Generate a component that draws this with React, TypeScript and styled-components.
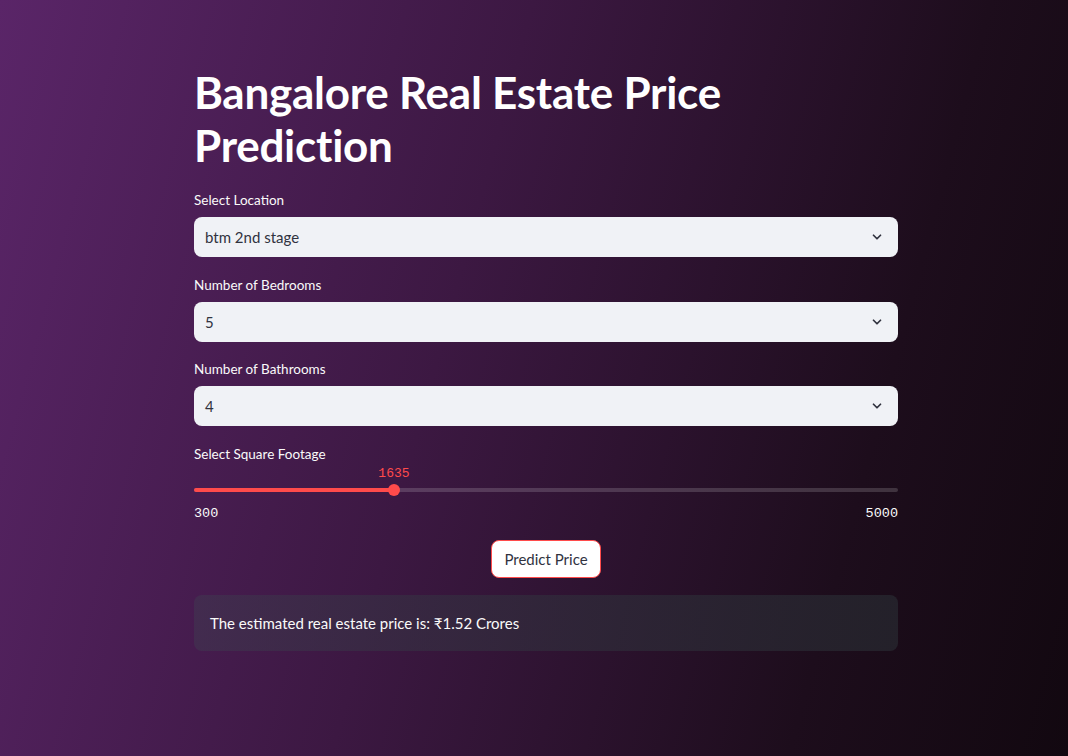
import styled, { createGlobalStyle } from "styled-components";
import { useState } from "react";

const GlobalStyle = createGlobalStyle`
  html, body {
    margin: 0;
    padding: 0;
  }
  body {
    font-family: "Lato", "Noto Sans", sans-serif;
    background: linear-gradient(105deg, #5a2568 0%, #3c1842 42%, #1d0d1c 78%, #120810 100%);
    min-height: 756px;
    color: #fafafa;
  }
`;

const Page = styled.div`
  width: 100%;
  min-height: 756px;
  box-sizing: border-box;
  padding-left: 24px;
  display: flex;
  justify-content: center;
`;

const Main = styled.main`
  width: 704px;
  padding-top: 66px;
  display: flex;
  flex-direction: column;
`;

const Title = styled.h1`
  margin: 0 0 19px;
  font-size: 44px;
  font-weight: 700;
  line-height: 53px;
  color: #ffffff;
  letter-spacing: -0.25px;
`;

const Field = styled.div<{ $last?: boolean }>`
  display: flex;
  flex-direction: column;
  margin-bottom: ${(p) => (p.$last ? 0 : 18.5)}px;
`;

const Label = styled.label`
  font-size: 13.5px;
  color: #fafafa;
  line-height: 18px;
  margin-bottom: 8px;
`;

const SelectBox = styled.div`
  height: 40px;
  border-radius: 8px;
  background: #f0f2f6;
  display: flex;
  align-items: center;
  justify-content: space-between;
  padding: 0 14px 0 11px;
  color: #31333f;
  font-size: 15px;
`;

const SliderWrap = styled.div`
  position: relative;
  height: 27px;
  display: flex;
  align-items: flex-end;
`;

const Track = styled.div`
  position: relative;
  width: 100%;
  height: 4px;
  border-radius: 2px;
  background: rgba(255, 255, 255, 0.16);
  margin-bottom: 6px;
`;

const Fill = styled.div`
  position: absolute;
  left: 0;
  top: 0;
  bottom: 0;
  border-radius: 2px;
  background: #ff4b4b;
`;

const Thumb = styled.div`
  position: absolute;
  top: 50%;
  width: 12px;
  height: 12px;
  margin: -6px 0 0 -6px;
  border-radius: 50%;
  background: #ff4b4b;
`;

const ThumbValue = styled.span`
  position: absolute;
  bottom: 11px;
  transform: translateX(-50%);
  font-family: "Liberation Mono", monospace;
  font-size: 13px;
  color: #ff4b4b;
`;

const Range = styled.div`
  display: flex;
  justify-content: space-between;
  font-family: "Liberation Mono", monospace;
  font-size: 13.5px;
  color: #fafafa;
  margin-top: 8px;
`;

const ButtonRow = styled.div`
  display: flex;
  justify-content: center;
  margin-top: 19px;
`;

const PredictButton = styled.button`
  height: 38px;
  padding: 0 12px;
  border-radius: 8px;
  border: 1px solid #ff4b4b;
  background: #ffffff;
  color: #31333f;
  font-family: inherit;
  font-size: 15px;
  cursor: pointer;
`;

const Result = styled.div`
  margin-top: 17px;
  height: 56px;
  border-radius: 8px;
  background: linear-gradient(90deg, rgba(64, 56, 80, 0.55), rgba(38, 38, 46, 0.8));
  display: flex;
  align-items: center;
  padding: 0 16px;
  font-size: 15px;
  color: #fafafa;
`;

const Chevron = () => (
  <svg width="14" height="14" viewBox="0 0 24 24" fill="none" stroke="#31333f" strokeWidth="3" strokeLinecap="round" strokeLinejoin="round">
    <path d="M6 9l6 6 6-6" />
  </svg>
);

function Select({ label, value }: { label: string; value: string }) {
  return (
    <Field>
      <Label>{label}</Label>
      <SelectBox>
        <span>{value}</span>
        <Chevron />
      </SelectBox>
    </Field>
  );
}

function App() {
  const [sqft] = useState(1635);
  const min = 300;
  const max = 5000;
  const pct = ((sqft - min) / (max - min)) * 100;
  return (
    <>
      <GlobalStyle />
      <Page>
        <Main>
          <Title>
            Bangalore Real Estate Price
            <br />
            Prediction
          </Title>
          <Select label="Select Location" value="btm 2nd stage" />
          <Select label="Number of Bedrooms" value="5" />
          <Select label="Number of Bathrooms" value="4" />
          <Field $last>
            <Label>Select Square Footage</Label>
            <SliderWrap>
              <Track>
                <Fill style={{ width: `${pct}%` }} />
                <Thumb style={{ left: `${pct}%` }} />
                <ThumbValue style={{ left: `${pct}%` }}>{sqft}</ThumbValue>
              </Track>
            </SliderWrap>
            <Range>
              <span>{min}</span>
              <span>{max}</span>
            </Range>
          </Field>
          <ButtonRow>
            <PredictButton>Predict Price</PredictButton>
          </ButtonRow>
          <Result>The estimated real estate price is: ₹1.52 Crores</Result>
        </Main>
      </Page>
    </>
  );
}

export default App;
